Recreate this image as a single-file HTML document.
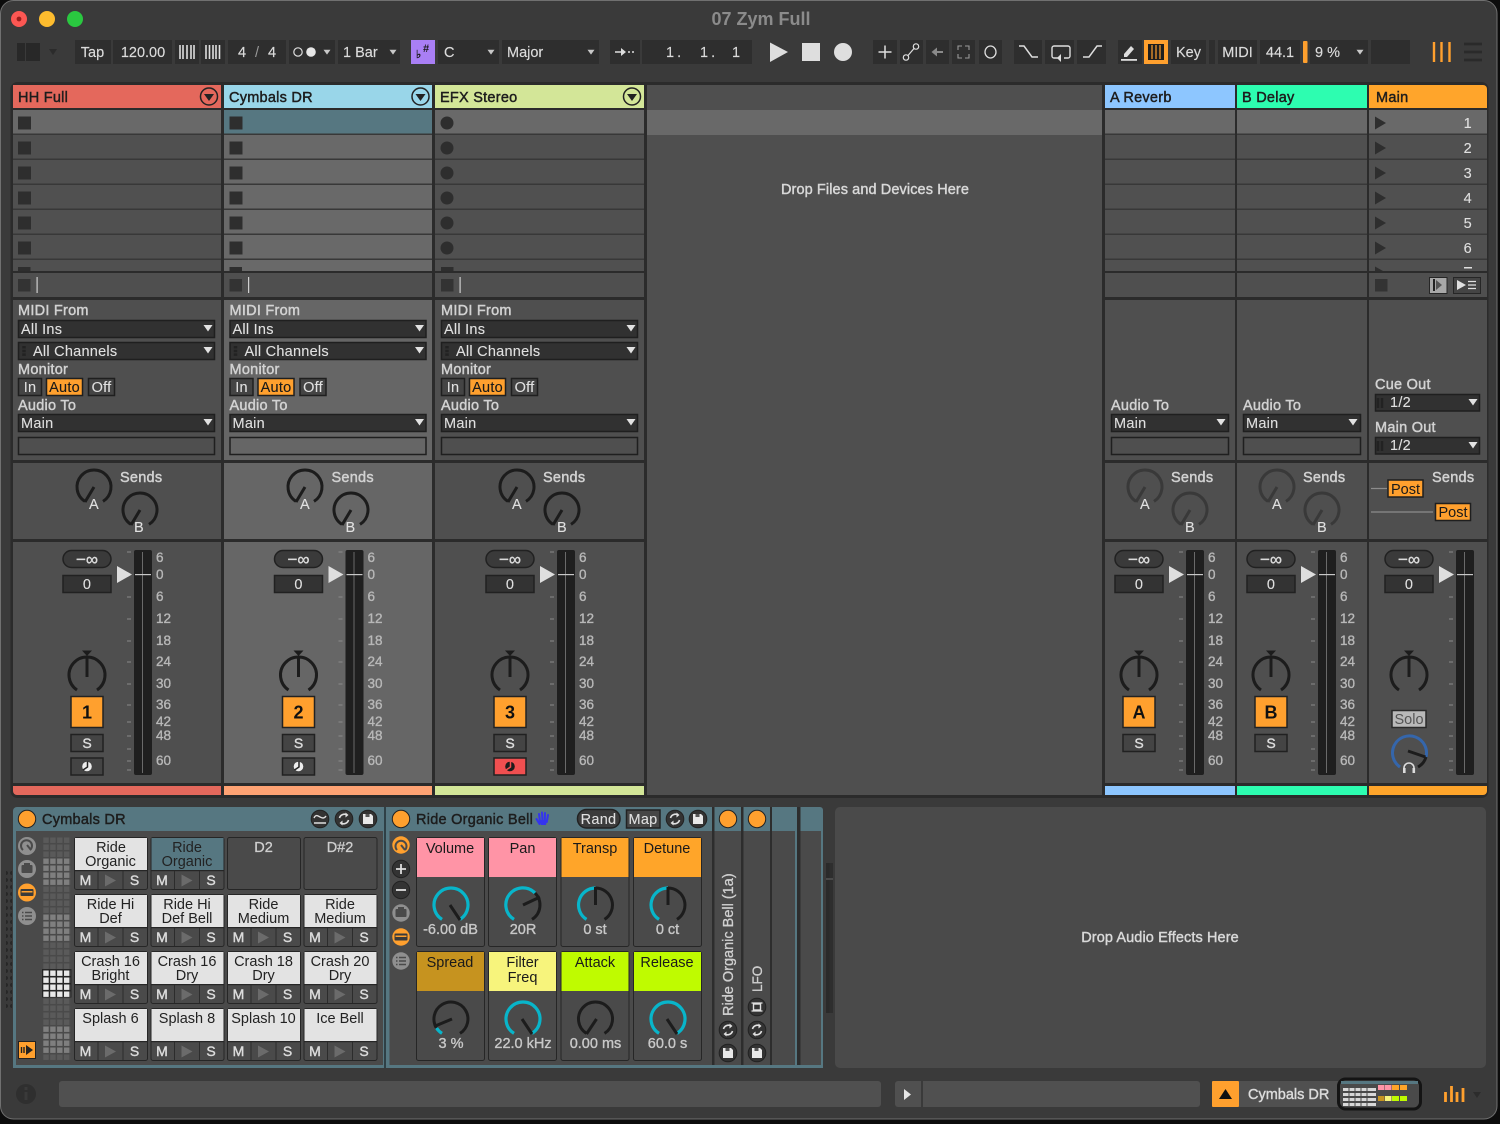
<!DOCTYPE html>
<html><head><meta charset="utf-8"><title>07 Zym Full</title>
<style>
html,body{margin:0;padding:0;background:#0c0c0c;width:1500px;height:1124px;overflow:hidden}
svg{display:block;position:absolute;left:0;top:0}
text{font-family:"Liberation Sans",sans-serif;font-size:14px;fill:#d9d9d9}
.tb{font-size:14.5px;fill:#dcdcdc;stroke:#dcdcdc;stroke-width:.15}
.h{font-size:14.5px;letter-spacing:.25px;fill:#1d1d1d;stroke:#1d1d1d;stroke-width:.45}
.l{font-size:14.5px;letter-spacing:.25px;fill:#d2d2d2;stroke:#d2d2d2;stroke-width:.45}
.v{font-size:14.5px;letter-spacing:.25px;fill:#e0e0e0;stroke:#e0e0e0;stroke-width:.1}
.m{text-anchor:middle}
.db{font-size:13.5px;fill:#b8b8b8;stroke:#b8b8b8;stroke-width:.35}
.d{fill:#1b1b1b}
.p{font-size:14.5px;fill:#222;text-anchor:middle}
.ms{font-size:14px;fill:#dcdcdc;stroke:#dcdcdc;stroke-width:.4;text-anchor:middle}
.kv{font-size:14.5px;fill:#c8c8c8;stroke:#c8c8c8;stroke-width:.35;text-anchor:middle}
.n{font-size:18px;font-weight:bold;fill:#111;text-anchor:middle}
.ml{font-size:14.5px;fill:#1a1a1a;text-anchor:middle}
.a{stroke:#1c1c1c;stroke-width:3;fill:none}
.a2{stroke:#393939;stroke-width:3;fill:none}
.t{stroke:#08b5ca;stroke-width:3.2;fill:none}
</style></head><body>
<svg width="1500" height="1124" viewBox="0 0 1500 1124" xmlns="http://www.w3.org/2000/svg">
<defs>
<pattern id="rows" x="0" y="110" width="10" height="25" patternUnits="userSpaceOnUse"><rect width="10" height="25" fill="#505050"/><rect y="23.5" width="10" height="1.5" fill="#383838"/></pattern>
<pattern id="rowsS" x="0" y="110" width="10" height="25" patternUnits="userSpaceOnUse"><rect width="10" height="25" fill="#696969"/><rect y="23.5" width="10" height="1.5" fill="#383838"/></pattern>
<pattern id="cD" x="43.3" y="837.5" width="6.9" height="7" patternUnits="userSpaceOnUse"><rect width="5.4" height="5.4" fill="#5a5a5a"/></pattern>
<pattern id="cL" x="43.3" y="837.5" width="6.9" height="7" patternUnits="userSpaceOnUse"><rect width="5.4" height="5.4" fill="#7f7f7f"/></pattern>
<pattern id="cW" x="43.3" y="837.5" width="6.9" height="7" patternUnits="userSpaceOnUse"><rect width="5.4" height="5.4" fill="#e8e8e8"/></pattern>
<pattern id="dots" x="3" y="870" width="6" height="7" patternUnits="userSpaceOnUse"><circle cx="3" cy="3" r="2" fill="#272727"/></pattern>
<polygon id="tri" points="-4.5,-3 4.5,-3 0,3.5" fill="#e2e2e2"/>
<polygon id="sm" points="-3.5,-2.2 3.5,-2.2 0,2.6" fill="#c8c8c8"/>
<g id="k"><path class="a" d="M-9 14.4A17 17 0 1 1 9 14.4"/><path class="a" stroke-width="2.5" d="M0 0L-9 15"/></g>
<g id="kd"><path class="a2" d="M-9 14.4A17 17 0 1 1 9 14.4"/><path class="a2" d="M0 0L-9 15"/></g>
<g id="mix">
<rect x="63" y="550.5" width="48" height="17" rx="8.5" fill="#3a3a3a" stroke="#212121" stroke-width="1.5"/>
<rect x="63" y="575.5" width="48" height="17" fill="#333" stroke="#212121" stroke-width="1.5"/>
<polygon points="117,566 117,583 132,574.5" fill="#dedede"/>
<rect x="134" y="550" width="18" height="225" rx="2" fill="#1f1f1f"/>
<rect x="142" y="552" width="1" height="221" fill="#6a6a6a"/>
<rect x="135" y="574" width="16" height="1.2" fill="#c8c8c8"/>
<path d="M127 552h4M127 597h4M127 619h4M127 641h4M127 662h4M127 684h4M127 705h4M127 722h4M127 736h4M127 749h4M127 761h4M127 770h4" stroke="#8a8a8a" stroke-width="1"/>
<polygon points="82,650.5 92,650.5 87,656" fill="#1c1c1c"/>
<path class="a" d="M77 690A18 18 0 1 1 97 690"/>
<path class="a" d="M87 658V677"/>
</g>
<g id="sb"><rect x="71" y="734.5" width="32" height="17" fill="#444" stroke="#212121" stroke-width="1.5"/></g>
<g id="arm"><rect x="71" y="758" width="32" height="17" fill="#444" stroke="#212121" stroke-width="1.5"/><circle cx="87" cy="766.5" r="4.8" fill="#ececec"/><path d="M87.500 761.500V767L83 770" stroke="#222" stroke-width="1.500" fill="none"/></g>
<g id="trk"><rect x="71" y="696.5" width="32" height="31" fill="#ffa02e" stroke="#222" stroke-width="1.5"/></g>
<g id="io">
<rect x="18.5" y="320.5" width="196" height="17" fill="#313131" stroke="#1f1f1f" stroke-width="1.5"/>
<use href="#tri" x="208" y="328"/>
<rect x="18.5" y="342.5" width="196" height="17" fill="#313131" stroke="#1f1f1f" stroke-width="1.5"/>
<use href="#tri" x="208" y="350"/>
<path d="M24 346v10" stroke="#222" stroke-width="3.5" stroke-dasharray="2.5 1.2"/>
<rect x="18.5" y="378.5" width="23" height="17" fill="#444" stroke="#1f1f1f" stroke-width="1.5"/>
<rect x="46.5" y="378.5" width="36" height="17" fill="#ffa02e" stroke="#1f1f1f" stroke-width="1.5"/>
<rect x="88.5" y="378.5" width="26" height="17" fill="#444" stroke="#1f1f1f" stroke-width="1.5"/>
<rect x="18.5" y="414.5" width="196" height="17" fill="#313131" stroke="#1f1f1f" stroke-width="1.5"/>
<use href="#tri" x="208" y="422"/>
<rect x="18.5" y="437.5" width="196" height="17" fill="none" stroke="#1f1f1f" stroke-width="1.5"/>
</g>
<g id="rt">
<rect x="1111.5" y="414.5" width="117" height="17" fill="#313131" stroke="#1f1f1f" stroke-width="1.5"/>
<use href="#tri" x="1221" y="422"/>
<rect x="1111.5" y="437.5" width="117" height="17" fill="none" stroke="#1f1f1f" stroke-width="1.5"/>
</g>
<g id="clip"><rect x="-6.5" y="-6.5" width="13" height="13" fill="#2e2e2e"/></g>
<g id="pad">
<rect x="74.5" y="837.5" width="73" height="52" rx="2" fill="#4a4a4a" stroke="#262626"/>
<rect x="75" y="838" width="72" height="32"/>
<rect x="75" y="870" width="72" height="1.2" fill="#262626"/>
<rect x="97.5" y="871" width="1" height="18" fill="#2c2c2c"/>
<rect x="122.5" y="871" width="1" height="18" fill="#2c2c2c"/>
<polygon points="105,874.5 105,886.5 116,880.5" fill="#6b6b6b"/>
</g>
<g id="empty"><rect x="74.5" y="837.5" width="73" height="52" rx="2" fill="#4a4a4a" stroke="#262626"/></g>
<g id="cell">
<rect x="416.5" y="837.5" width="68" height="109" rx="2" fill="#4a4a4a" stroke="#262626"/>
<rect x="417" y="838" width="67" height="39"/>
</g>
<g id="rc"><circle r="8.8" fill="#333" stroke="#222"/><path d="M-4.5 -1A5 5 0 0 1 3 -4M4.5 1A5 5 0 0 1 -3 4" stroke="#e0e0e0" stroke-width="1.6" fill="none"/><path d="M1.5 -6.5L4.5 -4L1.5 -1.5ZM-1.5 6.5L-4.5 4L-1.5 1.5Z" fill="#e0e0e0"/></g>
<g id="sv"><circle r="8.8" fill="#333" stroke="#222"/><path d="M-5 -5H3L5 -3V5H-5Z" fill="#e8e8e8"/><rect x="-2.5" y="-5" width="4" height="3" fill="#555"/></g>
</defs>

<!-- window -->
<rect x="0.5" y="0.5" width="1496.5" height="1118.5" rx="13" fill="#3a3a3a" stroke="#707070"/>
<circle cx="19" cy="19" r="8" fill="#fc5753"/><circle cx="19" cy="19" r="2.4" fill="#9a1f1c"/>
<circle cx="47" cy="19" r="8" fill="#fdbc2e"/><circle cx="75" cy="19" r="8" fill="#2ac840"/>
<text x="761" y="25" class="m" style="font-size:18px;font-weight:bold;fill:#8b8b8b">07 Zym Full</text>

<!-- toolbar -->
<g fill="#2e2e2e">
<rect x="17" y="43" width="8" height="18" fill="#282828"/><rect x="26" y="43" width="14" height="18" fill="#282828"/>
<rect x="75" y="40" width="36" height="24"/><rect x="113" y="40" width="59" height="24"/><rect x="175" y="40" width="24" height="24"/><rect x="201" y="40" width="24" height="24"/><rect x="228" y="40" width="58" height="24"/><rect x="289" y="40" width="46" height="24"/><rect x="338" y="40" width="62" height="24"/>
<rect x="438" y="40" width="61" height="24"/><rect x="502" y="40" width="97" height="24"/><rect x="610" y="40" width="30" height="24"/><rect x="642" y="40" width="110" height="24"/>
<rect x="873" y="40" width="24" height="24"/><rect x="900" y="40" width="23" height="24"/><rect x="926" y="40" width="23" height="24"/><rect x="952" y="40" width="23" height="24"/><rect x="979" y="40" width="23" height="24"/>
<rect x="1014" y="40" width="28" height="24"/><rect x="1045" y="40" width="29" height="24"/><rect x="1077" y="40" width="29" height="24"/>
<rect x="1118" y="40" width="24" height="24"/><rect x="1171" y="40" width="35" height="24"/><rect x="1209" y="40" width="6" height="24"/><rect x="1218" y="40" width="39" height="24"/><rect x="1260" y="40" width="40" height="24"/><rect x="1310" y="40" width="58" height="24"/><rect x="1371" y="40" width="39" height="24"/>
</g>
<polygon points="49,49 57,49 53,55" fill="#2b2b2b"/>
<text x="92.5" y="57" class="tb m">Tap</text>
<text x="143" y="57" class="tb m">120.00</text>
<path d="M180 45v14M183 45v14M187 45v14M191 45v14M194 45v14" stroke="#ddd" stroke-width="1.6"/>
<path d="M206 45v14M209.500 45v14M213 45v14M216 45v14M219.500 45v14" stroke="#ddd" stroke-width="1.6"/>
<text x="238" y="57" class="tb">4</text><text x="257" y="57" class="tb m" style="fill:#999;stroke:none">/</text><text x="268" y="57" class="tb">4</text>
<circle cx="298" cy="52" r="4.2" fill="none" stroke="#ddd" stroke-width="1.2"/><circle cx="311" cy="52" r="4.8" fill="#e6e6e6"/>
<use href="#sm" x="327" y="52"/>
<text x="343" y="57" class="tb">1 Bar</text><use href="#sm" x="393" y="52"/>
<rect x="411" y="40" width="24" height="24" fill="#a97ff5"/>
<text x="416" y="58" style="font-size:11px;fill:#1a1a1a;font-weight:bold">♭</text><text x="423" y="52" style="font-size:11px;fill:#1a1a1a;font-weight:bold">#</text>
<text x="444" y="57" class="tb">C</text><use href="#sm" x="491" y="52"/>
<text x="507" y="57" class="tb">Major</text><use href="#sm" x="591" y="52"/>
<path d="M615 52h8M628 52h2M632 52h2" stroke="#ddd" stroke-width="1.6"/><polygon points="621,48 626,52 621,56" fill="#ddd"/>
<text x="666" y="57" class="tb" style="letter-spacing:3px">1.</text><text x="700" y="57" class="tb" style="letter-spacing:3px">1.</text><text x="732" y="57" class="tb">1</text>
<polygon points="770,42.500 770,62 788,52" fill="#dedede"/>
<rect x="802" y="43" width="18" height="18" fill="#dedede"/>
<circle cx="843" cy="52" r="9" fill="#dedede"/>
<path d="M878.500 52h13M885 45.500v13" stroke="#ddd" stroke-width="1.5"/>
<circle cx="906" cy="57.500" r="2.700" fill="none" stroke="#ddd" stroke-width="1.2"/><circle cx="916" cy="46.500" r="2.700" fill="none" stroke="#ddd" stroke-width="1.2"/><path d="M908 55.500l6-7" stroke="#ddd" stroke-width="1.2"/>
<path d="M943 52h-9" stroke="#8a8a8a" stroke-width="2"/><polygon points="937,47.500 931.500,52 937,56.500" fill="#8a8a8a"/>
<path d="M958 50v-4h4M969 50v-4h-4M958 54v4h4M969 54v4h-4" stroke="#999" stroke-width="1.1" fill="none"/>
<ellipse cx="990.500" cy="52" rx="5.500" ry="6" fill="none" stroke="#ddd" stroke-width="1.3"/>
<path d="M1019 46h5l8 11h6" stroke="#ddd" stroke-width="1.5" fill="none"/>
<path d="M1064 59h4a2 2 0 0 0 2-2v-8a2 2 0 0 0-2-2h-14a2 2 0 0 0-2 2v8a2 2 0 0 0 2 2h5" stroke="#ddd" stroke-width="1.4" fill="none" transform="translate(0 -1)"/><polygon points="1061,54 1057,58 1061,62" fill="#ddd"/>
<path d="M1083 57h6l8-11h5" stroke="#ddd" stroke-width="1.5" fill="none"/>
<path d="M1124 54l7-8 3 3-7 8h-3z" fill="#ddd"/><rect x="1121" y="59" width="16" height="1.800" fill="#ddd"/>
<rect x="1144" y="40" width="24" height="24" fill="#ffa02e"/>
<rect x="1148" y="44" width="16" height="16" fill="#1e1e1e"/><path d="M1152 45v14M1156 45v14M1160 45v14" stroke="#ffa02e" stroke-width="1.200"/>
<text x="1188.500" y="57" class="tb m">Key</text>
<text x="1237.500" y="57" class="tb m">MIDI</text>
<text x="1280" y="57" class="tb m">44.1</text>
<rect x="1303" y="41" width="4.500" height="22" rx="1" fill="#ffa02e"/>
<text x="1315" y="57" class="tb">9 %</text><use href="#sm" x="1360" y="52"/>
<path d="M1434 42v20M1441.500 42v20M1449.500 42v20" stroke="#ffa02e" stroke-width="2.400"/>
<path d="M1464 44h18M1464 52h18M1464 60h18" stroke="#2a2a2a" stroke-width="2.800"/>

<!-- session frame -->
<rect x="10.500" y="82" width="1478" height="716" rx="7" fill="#2b2b2b"/>
<!-- headers -->
<rect x="13" y="85" width="208" height="23" fill="#e4685c"/>
<rect x="224" y="85" width="208" height="23" fill="#99d6e9"/>
<rect x="435" y="85" width="209" height="23" fill="#d3e698"/>
<rect x="647" y="85" width="455" height="710" fill="#4f4f4f"/>
<rect x="1105" y="85" width="130" height="23" fill="#8dc6ff"/>
<rect x="1237" y="85" width="130" height="23" fill="#2dfdb0"/>
<path d="M1369 85h114a4 4 0 0 1 4 4v19h-118z" fill="#ffa52b"/>
<text x="18" y="102" class="h">HH Full</text>
<text x="229" y="102" class="h">Cymbals DR</text>
<text x="440" y="102" class="h">EFX Stereo</text>
<text x="1110" y="102" class="h">A Reverb</text>
<text x="1242" y="102" class="h">B Delay</text>
<text x="1376" y="102" class="h">Main</text>
<g fill="none" stroke="#222" stroke-width="1.500"><circle cx="209" cy="96.500" r="8.500"/><circle cx="420.500" cy="96.500" r="8.500"/><circle cx="632" cy="96.500" r="8.500"/></g>
<g fill="#222"><polygon points="204,94 214,94 209,101"/><polygon points="415.500,94 425.500,94 420.500,101"/><polygon points="627,94 637,94 632,101"/></g>

<!-- clip rows -->
<rect x="13" y="110" width="208" height="161" fill="url(#rows)"/>
<rect x="224" y="110" width="208" height="161" fill="url(#rowsS)"/>
<rect x="435" y="110" width="209" height="161" fill="url(#rows)"/>
<rect x="1105" y="110" width="130" height="161" fill="url(#rows)"/>
<rect x="1237" y="110" width="130" height="161" fill="url(#rows)"/>
<rect x="1369" y="110" width="118" height="161" fill="url(#rows)"/>
<g fill="#696969"><rect x="13" y="110" width="208" height="23.500"/><rect x="435" y="110" width="209" height="23.500"/><rect x="647" y="110" width="455" height="25"/><rect x="1105" y="110" width="130" height="23.500"/><rect x="1237" y="110" width="130" height="23.500"/><rect x="1369" y="110" width="118" height="23.500"/></g>
<rect x="224" y="110" width="208" height="23.500" fill="#567781"/>
<!-- clip glyphs -->
<use href="#clip" x="24.500" y="123"/><use href="#clip" x="24.500" y="148"/><use href="#clip" x="24.500" y="173"/><use href="#clip" x="24.500" y="198"/><use href="#clip" x="24.500" y="223"/><use href="#clip" x="24.500" y="248"/>
<use href="#clip" x="236" y="123"/><use href="#clip" x="236" y="148"/><use href="#clip" x="236" y="173"/><use href="#clip" x="236" y="198"/><use href="#clip" x="236" y="223"/><use href="#clip" x="236" y="248"/>
<g fill="#2e2e2e"><circle cx="447" cy="123" r="6.500"/><circle cx="447" cy="148" r="6.500"/><circle cx="447" cy="173" r="6.500"/><circle cx="447" cy="198" r="6.500"/><circle cx="447" cy="223" r="6.500"/><circle cx="447" cy="248" r="6.500"/>
<rect x="18" y="267" width="12.500" height="4"/><rect x="229.500" y="267" width="12.500" height="4"/><rect x="441" y="267" width="12.500" height="4"/></g>
<g fill="#2e2e2e"><polygon points="1375,116.500 1375,129.500 1386,123"/><polygon points="1375,141.500 1375,154.500 1386,148"/><polygon points="1375,166.500 1375,179.500 1386,173"/><polygon points="1375,191.500 1375,204.500 1386,198"/><polygon points="1375,216.500 1375,229.500 1386,223"/><polygon points="1375,241.500 1375,254.500 1386,248"/><polygon points="1375,266.500 1375,271 1383,271"/></g>
<g text-anchor="end"><text x="1472" y="128" class="v">1</text><text x="1472" y="153" class="v">2</text><text x="1472" y="178" class="v">3</text><text x="1472" y="203" class="v">4</text><text x="1472" y="228" class="v">5</text><text x="1472" y="253" class="v">6</text></g>
<rect x="1464" y="267" width="8" height="1.500" fill="#e0e0e0"/>
<!-- stop row -->
<g fill="#4f4f4f"><rect x="13" y="273" width="208" height="24"/><rect x="224" y="273" width="208" height="24"/><rect x="435" y="273" width="209" height="24"/><rect x="1105" y="273" width="130" height="24"/><rect x="1237" y="273" width="130" height="24"/><rect x="1369" y="273" width="118" height="24"/></g>
<g fill="#333"><rect x="18" y="279" width="12.500" height="12.500"/><rect x="229.500" y="279" width="12.500" height="12.500"/><rect x="441" y="279" width="12.500" height="12.500"/><rect x="1375" y="279" width="12.500" height="12.500"/></g>
<g fill="#cfcfcf"><rect x="36.500" y="277" width="1.200" height="16"/><rect x="248" y="277" width="1.200" height="16"/><rect x="459.500" y="277" width="1.200" height="16"/></g>
<rect x="1429.500" y="277.500" width="17.500" height="16" fill="#a8a8a8" stroke="#262626"/><path d="M1434 279v12" stroke="#222" stroke-width="2"/><polygon points="1436,280 1436,290 1442,285" fill="#555"/>
<rect x="1453.500" y="277.500" width="27" height="16" fill="#444" stroke="#262626"/><polygon points="1457,280 1457,290 1466,285" fill="#e0e0e0"/><path d="M1468 281.500h8M1468 285h8M1468 288.500h8" stroke="#e0e0e0" stroke-width="1.200"/>

<!-- panels io / sends / mixer -->
<g fill="#4f4f4f">
<rect x="13" y="300" width="208" height="160"/><rect x="13" y="463" width="208" height="76"/><rect x="13" y="542" width="208" height="241"/>
<rect x="435" y="300" width="209" height="160"/><rect x="435" y="463" width="209" height="76"/><rect x="435" y="542" width="209" height="241"/>
<rect x="1105" y="300" width="130" height="160"/><rect x="1105" y="463" width="130" height="76"/><rect x="1105" y="542" width="130" height="241"/>
<rect x="1237" y="300" width="130" height="160"/><rect x="1237" y="463" width="130" height="76"/><rect x="1237" y="542" width="130" height="241"/>
<rect x="1369" y="300" width="118" height="160"/><rect x="1369" y="463" width="118" height="76"/><rect x="1369" y="542" width="118" height="241"/>
</g>
<g fill="#666"><rect x="224" y="300" width="208" height="160"/><rect x="224" y="463" width="208" height="76"/><rect x="224" y="542" width="208" height="241"/></g>
<path d="M13 786h208v9h-204a4 4 0 0 1-4-4z" fill="#e4685c"/>
<rect x="224" y="786" width="208" height="9" fill="#ffa374"/>
<rect x="435" y="786" width="209" height="9" fill="#d3e698"/>
<rect x="1105" y="786" width="130" height="9" fill="#8dc6ff"/>
<rect x="1237" y="786" width="130" height="9" fill="#2dfdb0"/>
<path d="M1369 786h118v5a4 4 0 0 1-4 4h-114z" fill="#ffa52b"/>
<text x="875" y="194" class="l m" style="fill:#dcdcdc;letter-spacing:.1px">Drop Files and Devices Here</text>

<!-- track io -->
<use href="#io"/><use href="#io" x="211.500"/><use href="#io" x="423"/>
<text x="18" y="315" class="l">MIDI From</text><text x="21" y="334" class="v">All Ins</text><text x="33" y="356" class="v">All Channels</text><text x="18" y="374" class="l">Monitor</text><text x="30" y="392" class="v m">In</text><text x="64.500" y="392" class="v m" style="fill:#1a1a1a;stroke:#1a1a1a">Auto</text><text x="101.500" y="392" class="v m">Off</text><text x="18" y="410" class="l">Audio To</text><text x="21" y="428" class="v">Main</text>
<text x="229.500" y="315" class="l">MIDI From</text><text x="232.500" y="334" class="v">All Ins</text><text x="244.500" y="356" class="v">All Channels</text><text x="229.500" y="374" class="l">Monitor</text><text x="241.500" y="392" class="v m">In</text><text x="276" y="392" class="v m" style="fill:#1a1a1a;stroke:#1a1a1a">Auto</text><text x="313" y="392" class="v m">Off</text><text x="229.500" y="410" class="l">Audio To</text><text x="232.500" y="428" class="v">Main</text>
<text x="441" y="315" class="l">MIDI From</text><text x="444" y="334" class="v">All Ins</text><text x="456" y="356" class="v">All Channels</text><text x="441" y="374" class="l">Monitor</text><text x="453" y="392" class="v m">In</text><text x="487.500" y="392" class="v m" style="fill:#1a1a1a;stroke:#1a1a1a">Auto</text><text x="524.500" y="392" class="v m">Off</text><text x="441" y="410" class="l">Audio To</text><text x="444" y="428" class="v">Main</text>
<!-- return io -->
<use href="#rt"/><use href="#rt" x="132"/>
<text x="1111" y="410" class="l">Audio To</text><text x="1114" y="428" class="v">Main</text>
<text x="1243" y="410" class="l">Audio To</text><text x="1246" y="428" class="v">Main</text>
<!-- main io -->
<text x="1375" y="389" class="l">Cue Out</text>
<rect x="1375.500" y="394.500" width="104" height="16.500" fill="#313131" stroke="#1f1f1f" stroke-width="1.500"/><use href="#tri" x="1473" y="402"/><path d="M1378 398v10M1382 398v10" stroke="#222" stroke-width="2.500"/><text x="1390" y="407" class="v">1/2</text>
<text x="1375" y="432" class="l">Main Out</text>
<rect x="1375.500" y="437.500" width="104" height="16.500" fill="#313131" stroke="#1f1f1f" stroke-width="1.500"/><use href="#tri" x="1473" y="445"/><path d="M1378 441v10M1382 441v10" stroke="#222" stroke-width="2.500"/><text x="1390" y="450" class="v">1/2</text>

<!-- sends -->
<text x="120" y="482" class="l">Sends</text><use href="#k" x="94" y="487"/><use href="#k" x="140" y="510"/><text x="94" y="509" class="v m">A</text><text x="139" y="532" class="v m">B</text>
<text x="331.500" y="482" class="l">Sends</text><use href="#k" x="305" y="487"/><use href="#k" x="351" y="510"/><text x="305" y="509" class="v m">A</text><text x="350.500" y="532" class="v m">B</text>
<text x="543" y="482" class="l">Sends</text><use href="#k" x="517" y="487"/><use href="#k" x="562" y="510"/><text x="517" y="509" class="v m">A</text><text x="562" y="532" class="v m">B</text>
<text x="1171" y="482" class="l">Sends</text><use href="#kd" x="1145" y="487"/><use href="#kd" x="1190" y="510"/><text x="1145" y="509" class="v m">A</text><text x="1190" y="532" class="v m">B</text>
<text x="1303" y="482" class="l">Sends</text><use href="#kd" x="1277" y="487"/><use href="#kd" x="1322" y="510"/><text x="1277" y="509" class="v m">A</text><text x="1322" y="532" class="v m">B</text>
<text x="1432" y="482" class="l">Sends</text>
<path d="M1371 488.500h16M1371 512h62" stroke="#8c8c8c" stroke-width="1.200"/>
<rect x="1388" y="480" width="35" height="17" fill="#ffa02e" stroke="#1f1f1f" stroke-width="1.500"/><text x="1405.500" y="494" class="ml">Post</text>
<rect x="1435.500" y="503.500" width="35" height="17" fill="#ffa02e" stroke="#1f1f1f" stroke-width="1.500"/><text x="1453" y="517" class="ml">Post</text>

<!-- mixers -->
<use href="#mix"/><use href="#mix" x="211.500"/><use href="#mix" x="423"/><use href="#mix" x="1052"/><use href="#mix" x="1184"/><use href="#mix" x="1322"/>
<use href="#trk"/><use href="#trk" x="211.500"/><use href="#trk" x="423"/><use href="#trk" x="1052"/><use href="#trk" x="1184"/>
<use href="#sb"/><use href="#sb" x="211.500"/><use href="#sb" x="423"/><use href="#sb" x="1052"/><use href="#sb" x="1184"/>
<use href="#arm"/><use href="#arm" x="211.500"/>
<rect x="494" y="758" width="32" height="17" fill="#f04f50" stroke="#212121" stroke-width="1.500"/><circle cx="510" cy="766.500" r="4.800" fill="#1c1c1c"/><path d="M510.500 761.500V767L506 770" stroke="#f04f50" stroke-width="1.500" fill="none"/>

<text x="87" y="565" class="ms" style="font-size:17px">−∞</text><text x="298.500" y="565" class="ms" style="font-size:17px">−∞</text><text x="510" y="565" class="ms" style="font-size:17px">−∞</text><text x="1139" y="565" class="ms" style="font-size:17px">−∞</text><text x="1271" y="565" class="ms" style="font-size:17px">−∞</text><text x="1409" y="565" class="ms" style="font-size:17px">−∞</text>
<text x="87" y="589" class="v m">0</text><text x="298.500" y="589" class="v m">0</text><text x="510" y="589" class="v m">0</text><text x="1139" y="589" class="v m">0</text><text x="1271" y="589" class="v m">0</text><text x="1409" y="589" class="v m">0</text>
<text x="87" y="718.500" class="n">1</text><text x="298.500" y="718.500" class="n">2</text><text x="510" y="718.500" class="n">3</text><text x="1139" y="718.500" class="n">A</text><text x="1271" y="718.500" class="n">B</text>
<text x="87" y="748" class="ms">S</text><text x="298.500" y="748" class="ms">S</text><text x="510" y="748" class="ms">S</text><text x="1139" y="748" class="ms">S</text><text x="1271" y="748" class="ms">S</text>

<g>
<text class="db" x="156" y="562">6</text><text class="db" x="156" y="579">0</text><text class="db" x="156" y="601">6</text><text class="db" x="156" y="623">12</text><text class="db" x="156" y="645">18</text><text class="db" x="156" y="666">24</text><text class="db" x="156" y="688">30</text><text class="db" x="156" y="709">36</text><text class="db" x="156" y="726">42</text><text class="db" x="156" y="740">48</text><text class="db" x="156" y="765">60</text>
<text class="db" x="367.500" y="562">6</text><text class="db" x="367.500" y="579">0</text><text class="db" x="367.500" y="601">6</text><text class="db" x="367.500" y="623">12</text><text class="db" x="367.500" y="645">18</text><text class="db" x="367.500" y="666">24</text><text class="db" x="367.500" y="688">30</text><text class="db" x="367.500" y="709">36</text><text class="db" x="367.500" y="726">42</text><text class="db" x="367.500" y="740">48</text><text class="db" x="367.500" y="765">60</text>
<text class="db" x="579" y="562">6</text><text class="db" x="579" y="579">0</text><text class="db" x="579" y="601">6</text><text class="db" x="579" y="623">12</text><text class="db" x="579" y="645">18</text><text class="db" x="579" y="666">24</text><text class="db" x="579" y="688">30</text><text class="db" x="579" y="709">36</text><text class="db" x="579" y="726">42</text><text class="db" x="579" y="740">48</text><text class="db" x="579" y="765">60</text>
<text class="db" x="1208" y="562">6</text><text class="db" x="1208" y="579">0</text><text class="db" x="1208" y="601">6</text><text class="db" x="1208" y="623">12</text><text class="db" x="1208" y="645">18</text><text class="db" x="1208" y="666">24</text><text class="db" x="1208" y="688">30</text><text class="db" x="1208" y="709">36</text><text class="db" x="1208" y="726">42</text><text class="db" x="1208" y="740">48</text><text class="db" x="1208" y="765">60</text>
<text class="db" x="1340" y="562">6</text><text class="db" x="1340" y="579">0</text><text class="db" x="1340" y="601">6</text><text class="db" x="1340" y="623">12</text><text class="db" x="1340" y="645">18</text><text class="db" x="1340" y="666">24</text><text class="db" x="1340" y="688">30</text><text class="db" x="1340" y="709">36</text><text class="db" x="1340" y="726">42</text><text class="db" x="1340" y="740">48</text><text class="db" x="1340" y="765">60</text>
</g>
<!-- main solo + cue -->
<rect x="1392" y="710.500" width="34" height="17" fill="#b9b9b9" stroke="#2a2a2a" stroke-width="1.500"/><text x="1409" y="724" class="m" style="font-size:14.500px;fill:#555">Solo</text>
<path d="M1400 767A17 17 0 1 1 1426 757" stroke="#3566ab" stroke-width="3" fill="none"/>
<path d="M1426 757A17 17 0 0 1 1418 767" stroke="#1c1c1c" stroke-width="3" fill="none"/>
<path d="M1408 751L1425.500 757" stroke="#1c1c1c" stroke-width="2.800"/>
<path d="M1404 771v-3a5 5 0 0 1 10 0v3" stroke="#dcdcdc" stroke-width="1.600" fill="none"/><rect x="1403" y="768" width="2.600" height="5" fill="#dcdcdc"/><rect x="1412.500" y="768" width="2.600" height="5" fill="#dcdcdc"/>

<!-- DETAIL VIEW -->
<rect x="6" y="870" width="6" height="140" fill="url(#dots)"/>
<path d="M13 811a4 4 0 0 1 4-4h803a3 3 0 0 1 3 3v258h-810z" fill="#567781"/>
<rect x="16" y="831" width="367" height="234" fill="#4a4a4a"/>
<rect x="384" y="807" width="2" height="261" fill="#2f4046"/>
<rect x="389.500" y="831" width="322.500" height="234" fill="#4a4a4a"/>
<rect x="712" y="807" width="2.500" height="258" fill="#2d2d2d"/>
<rect x="714.500" y="831" width="26.500" height="234" fill="#4a4a4a"/>
<rect x="741" y="807" width="2.500" height="258" fill="#2d2d2d"/>
<rect x="743.500" y="831" width="26.500" height="234" fill="#4a4a4a"/>
<rect x="770" y="807" width="2" height="258" fill="#2d2d2d"/>
<rect x="772" y="831" width="23" height="234" fill="#4a4a4a"/>
<rect x="797" y="807" width="3.500" height="258" fill="#2d2d2d"/>
<rect x="800.500" y="831" width="20.500" height="234" fill="#4a4a4a"/>
<circle cx="27" cy="819" r="8.700" fill="#ffa02e" stroke="#222"/>
<text x="42" y="824" class="h">Cymbals DR</text>
<g><circle cx="320" cy="819" r="8.800" fill="#333" stroke="#222"/><path d="M314 818c2-4 4-2 6-1s4 2 6-1M314 823h12" stroke="#e0e0e0" stroke-width="1.400" fill="none"/></g>
<use href="#rc" x="344" y="819"/><use href="#sv" x="368" y="819"/>
<circle cx="27" cy="846" r="9" fill="#8f8f8f"/><path d="M23 850a5.500 5.500 0 1 1 7 0" stroke="#4a4a4a" stroke-width="2" fill="none"/><path d="M27 845l4 5" stroke="#4a4a4a" stroke-width="2"/>
<circle cx="27" cy="869" r="9" fill="#8f8f8f"/><rect x="21.500" y="865" width="11" height="8" rx="1" fill="#4a4a4a"/><rect x="24" y="863" width="6" height="2" fill="#4a4a4a"/>
<circle cx="27" cy="892.500" r="9" fill="#ffa02e"/><rect x="20.500" y="889" width="13" height="7" rx="1" fill="#3a3a3a"/><rect x="21.500" y="891" width="11" height="1.500" fill="#ffa02e"/>
<circle cx="27" cy="916" r="9" fill="#8f8f8f"/><path d="M25 912.500h7M25 916h7M25 919.500h7M22 912.500h1.500M22 916h1.500M22 919.500h1.500" stroke="#4a4a4a" stroke-width="1.500"/>
<rect x="18.500" y="1041.500" width="17" height="17" fill="#ffa02e" stroke="#222"/><path d="M21.500 1047v6M24 1047v6" stroke="#222" stroke-width="1.400"/><polygon points="26,1045 26,1055 33,1050" fill="#222"/>

<!-- pad grid -->
<rect x="43" y="837.500" width="28" height="21" fill="url(#cD)"/>
<rect x="43" y="858.500" width="28" height="28" fill="url(#cL)"/>
<rect x="43" y="886.500" width="28" height="28" fill="url(#cD)"/>
<rect x="43" y="914.500" width="28" height="28" fill="url(#cL)"/>
<rect x="43" y="942.500" width="28" height="28" fill="url(#cD)"/>
<rect x="42" y="969" width="29.500" height="28.500" fill="#262626"/>
<rect x="43" y="970.500" width="28" height="28" fill="url(#cW)"/>
<rect x="43" y="998.500" width="28" height="28" fill="url(#cD)"/>
<rect x="43" y="1026.500" width="28" height="28" fill="url(#cL)"/>
<rect x="43" y="1054.500" width="28" height="6" fill="url(#cD)"/>

<!-- pads -->
<use href="#pad" fill="#e3e3e3"/><use href="#pad" x="76.500" fill="#567781"/><use href="#empty" x="153"/><use href="#empty" x="229.500"/>
<use href="#pad" y="57" fill="#e3e3e3"/><use href="#pad" x="76.500" y="57" fill="#e3e3e3"/><use href="#pad" x="153" y="57" fill="#e3e3e3"/><use href="#pad" x="229.500" y="57" fill="#e3e3e3"/>
<use href="#pad" y="114" fill="#e3e3e3"/><use href="#pad" x="76.500" y="114" fill="#e3e3e3"/><use href="#pad" x="153" y="114" fill="#e3e3e3"/><use href="#pad" x="229.500" y="114" fill="#e3e3e3"/>
<use href="#pad" y="171" fill="#e3e3e3"/><use href="#pad" x="76.500" y="171" fill="#e3e3e3"/><use href="#pad" x="153" y="171" fill="#e3e3e3"/><use href="#pad" x="229.500" y="171" fill="#e3e3e3"/>
<text x="111" y="852" class="p">Ride</text><text x="110.500" y="866" class="p">Organic</text>
<text x="187" y="852" class="p">Ride</text><text x="187" y="866" class="p">Organic</text>
<text x="263.500" y="852" class="p" style="fill:#cfcfcf;stroke:#cfcfcf;stroke-width:.3">D2</text>
<text x="340" y="852" class="p" style="fill:#cfcfcf;stroke:#cfcfcf;stroke-width:.3">D#2</text>
<text x="110.500" y="909" class="p">Ride Hi</text><text x="110.500" y="923" class="p">Def</text>
<text x="187" y="909" class="p">Ride Hi</text><text x="187" y="923" class="p">Def Bell</text>
<text x="263.500" y="909" class="p">Ride</text><text x="263.500" y="923" class="p">Medium</text>
<text x="340" y="909" class="p">Ride</text><text x="340" y="923" class="p">Medium</text>
<text x="110.500" y="966" class="p">Crash 16</text><text x="110.500" y="980" class="p">Bright</text>
<text x="187" y="966" class="p">Crash 16</text><text x="187" y="980" class="p">Dry</text>
<text x="263.500" y="966" class="p">Crash 18</text><text x="263.500" y="980" class="p">Dry</text>
<text x="340" y="966" class="p">Crash 20</text><text x="340" y="980" class="p">Dry</text>
<text x="110.500" y="1023" class="p">Splash 6</text>
<text x="187" y="1023" class="p">Splash 8</text>
<text x="263.500" y="1023" class="p">Splash 10</text>
<text x="340" y="1023" class="p">Ice Bell</text>
<text class="ms" y="885" x="85.500 134.500 162 211">MSMS</text>
<text class="ms" y="942" x="85.500 134.500 162 211 238.500 287.500 315 364">MSMSMSMS</text>
<text class="ms" y="999" x="85.500 134.500 162 211 238.500 287.500 315 364">MSMSMSMS</text>
<text class="ms" y="1056" x="85.500 134.500 162 211 238.500 287.500 315 364">MSMSMSMS</text>

<!-- instrument -->
<circle cx="401" cy="819" r="8.700" fill="#ffa02e" stroke="#222"/>
<text x="416" y="824" class="h">Ride Organic Bell</text>
<g stroke="#3434ee" stroke-width="2" stroke-linecap="round" fill="none"><path d="M539 814l1 8M542 812.500l.5 8M545 813l-.2 8M548 815l-1.200 7M536.500 819l3 5"/></g><path d="M539 820h8l-1 5h-5z" fill="#3434ee"/>
<rect x="577.500" y="809.500" width="42.500" height="18.500" rx="9" fill="#3c3c3c" stroke="#222" stroke-width="1.500"/><text x="598.500" y="824" class="v m">Rand</text>
<rect x="626.500" y="810" width="33.500" height="18" fill="#464646" stroke="#222" stroke-width="1.500"/><text x="643" y="824" class="v m">Map</text>
<use href="#rc" x="675" y="819"/><use href="#sv" x="698" y="819"/>
<circle cx="401" cy="845" r="8.700" fill="#ffa02e"/><path d="M397 850a5.500 5.500 0 1 1 8 0M401 845l4 5" stroke="#4a4a4a" stroke-width="2" fill="none"/>
<circle cx="401" cy="869" r="8.700" fill="#333" stroke="#222"/><path d="M396 869h10M401 864v10" stroke="#ddd" stroke-width="1.800"/>
<circle cx="401" cy="890" r="8.700" fill="#333" stroke="#222"/><path d="M396 890h10" stroke="#ddd" stroke-width="1.800"/>
<circle cx="401" cy="913" r="8.700" fill="#8f8f8f"/><rect x="395.500" y="909" width="11" height="8" rx="1" fill="#4a4a4a"/><rect x="398" y="907" width="6" height="2" fill="#4a4a4a"/>
<circle cx="401" cy="937" r="8.700" fill="#ffa02e"/><rect x="394.500" y="933.500" width="13" height="7" rx="1" fill="#3a3a3a"/><rect x="395.500" y="935.500" width="11" height="1.500" fill="#ffa02e"/>
<circle cx="401" cy="961" r="8.700" fill="#8f8f8f"/><path d="M399 957.500h7M399 961h7M399 964.500h7M396 957.500h1.500M396 961h1.500M396 964.500h1.500" stroke="#4a4a4a" stroke-width="1.500"/>

<use href="#cell" fill="#ff94a6"/><use href="#cell" x="72" fill="#ff94a6"/><use href="#cell" x="144.500" fill="#ffa529"/><use href="#cell" x="217" fill="#ffa529"/>
<use href="#cell" y="114" fill="#c6931f"/><use href="#cell" x="72" y="114" fill="#f7f47c"/><use href="#cell" x="144.500" y="114" fill="#bffb00"/><use href="#cell" x="217" y="114" fill="#bffb00"/>
<text x="450" y="853" class="ml">Volume</text><text x="522.500" y="853" class="ml">Pan</text><text x="595" y="853" class="ml">Transp</text><text x="667" y="853" class="ml">Detune</text>
<text x="450" y="967" class="ml">Spread</text><text x="522.500" y="967" class="ml">Filter</text><text x="522.500" y="982" class="ml">Freq</text><text x="595" y="967" class="ml">Attack</text><text x="667" y="967" class="ml">Release</text>

<g transform="translate(451 905)"><path class="t" d="M-9 14.400A17 17 0 1 1 9 14.400"/><path class="a" stroke-width="2.500" d="M-1 0L9 15"/></g>
<g transform="translate(523 905)"><path class="t" d="M-9 14.400A17 17 0 1 1 12 -12"/><path class="a" d="M12 -12A17 17 0 0 1 9 14.400"/><path class="a" stroke-width="2.500" d="M0 0L17 -8"/></g>
<g transform="translate(595.500 905)"><path class="t" d="M-9 14.400A17 17 0 0 1 0 -17"/><path class="a" d="M0 -17A17 17 0 0 1 9 14.400"/><path class="a" stroke-width="2.500" d="M0 0V-18"/></g>
<g transform="translate(668 905)"><path class="t" d="M-9 14.400A17 17 0 0 1 0 -17"/><path class="a" d="M0 -17A17 17 0 0 1 9 14.400"/><path class="a" stroke-width="2.500" d="M0 0V-18"/></g>
<g transform="translate(451 1019)"><path class="a" d="M-14.500 9A17 17 0 1 1 9 14.400"/><path class="t" d="M-9 14.400A17 17 0 0 1 -14.500 9"/><path class="a" stroke-width="2.500" d="M1 0L-17 7.500"/></g>
<g transform="translate(523 1019)"><path class="t" d="M-9 14.400A17 17 0 1 1 9 14.400"/><path class="a" stroke-width="2.500" d="M-1 0L9 15"/></g>
<g transform="translate(595.500 1019)"><path class="a" d="M-9 14.400A17 17 0 1 1 9 14.400"/><path class="a" stroke-width="2.500" d="M1 0L-9 15"/></g>
<g transform="translate(668 1019)"><path class="t" d="M-9 14.400A17 17 0 1 1 9 14.400"/><path class="a" stroke-width="2.500" d="M-1 0L9 15"/></g>
<text x="450.500" y="934" class="kv">-6.00 dB</text><text x="523" y="934" class="kv">20R</text><text x="595" y="934" class="kv">0 st</text><text x="667.500" y="934" class="kv">0 ct</text>
<text x="451" y="1048" class="kv">3 %</text><text x="523" y="1048" class="kv">22.0 kHz</text><text x="595.500" y="1048" class="kv">0.00 ms</text><text x="667.500" y="1048" class="kv">60.0 s</text>

<!-- chain fold columns -->
<circle cx="728" cy="819" r="8.700" fill="#ffa02e" stroke="#222"/>
<circle cx="757" cy="819" r="8.700" fill="#ffa02e" stroke="#222"/>
<text transform="translate(733 1016) rotate(-90)" style="font-size:14.500px;fill:#cfcfcf;stroke:#cfcfcf;stroke-width:.3">Ride Organic Bell (1a)</text>
<text transform="translate(762 992) rotate(-90)" style="font-size:13.500px;fill:#cfcfcf;stroke:#cfcfcf;stroke-width:.3">LFO</text>
<use href="#rc" x="728" y="1030"/><use href="#sv" x="728" y="1053"/>
<g transform="translate(757 1007)"><circle r="8.800" fill="#333" stroke="#222"/><rect x="-3.500" y="-3" width="7" height="6" fill="none" stroke="#e0e0e0" stroke-width="1.400"/><path d="M-5.500 -4h11M-5.500 4h11" stroke="#e0e0e0" stroke-width="1.200"/></g>
<use href="#rc" x="757" y="1030"/><use href="#sv" x="757" y="1053"/>

<!-- right side -->
<rect x="826" y="863" width="3.500" height="150" fill="#2a2a2a"/><rect x="829.500" y="863" width="3.500" height="150" fill="#2e2e2e"/><rect x="826" y="878" width="7" height="2" fill="#4a4a4a"/>
<rect x="835" y="807" width="651" height="261" rx="5" fill="#4a4a4a"/>
<text x="1160" y="942" class="l m" style="fill:#dcdcdc;letter-spacing:.1px">Drop Audio Effects Here</text>

<!-- status bar -->
<circle cx="26" cy="1094" r="10" fill="#2f2f2f"/><rect x="24.500" y="1092" width="3" height="8" fill="#3a3a3a"/><rect x="24.500" y="1087" width="3" height="3" fill="#3a3a3a"/>
<rect x="59" y="1081" width="822" height="26" rx="3" fill="#505050"/>
<path d="M895 1084a3 3 0 0 1 3-3h23v26h-23a3 3 0 0 1-3-3z" fill="#505050"/>
<polygon points="904,1089 904,1100 911,1094.500" fill="#e6e6e6"/>
<path d="M923 1081h274a3 3 0 0 1 3 3v20a3 3 0 0 1-3 3h-274z" fill="#505050"/>
<rect x="1212" y="1081" width="27" height="26" rx="1" fill="#ffa02e"/><polygon points="1225.500,1089 1232,1099 1219,1099" fill="#111"/>
<rect x="1239" y="1081" width="101" height="26" fill="#505050"/>
<text x="1248" y="1099" class="l" style="fill:#e0e0e0;letter-spacing:0">Cymbals DR</text>
<rect x="1338.500" y="1079" width="82" height="30" rx="7" fill="#4a4a4a" stroke="#141414" stroke-width="3"/>
<rect x="1341" y="1081" width="77" height="3" fill="#567781"/>
<g fill="#d8d8d8"><rect x="1343" y="1088" width="33" height="3"/><rect x="1343" y="1093" width="33" height="3"/><rect x="1343" y="1098" width="33" height="3"/><rect x="1343" y="1103" width="33" height="3"/></g>
<path d="M1349 1086v21M1355 1086v21M1361 1086v21M1367 1086v21" stroke="#4a4a4a"/>
<rect x="1378" y="1085" width="6.500" height="5" fill="#ff94a6"/><rect x="1385" y="1085" width="6.500" height="5" fill="#ff94a6"/><rect x="1392" y="1085" width="7" height="5" fill="#ffa529"/><rect x="1400" y="1085" width="7" height="5" fill="#ffa529"/>
<rect x="1378" y="1096" width="6.500" height="5" fill="#c6931f"/><rect x="1385" y="1096" width="6.500" height="5" fill="#f7f47c"/><rect x="1392" y="1096" width="7" height="5" fill="#bffb00"/><rect x="1400" y="1096" width="7" height="5" fill="#bffb00"/>
<path d="M1445.500 1102v-10M1451.500 1102v-16M1457 1102v-10M1463 1102v-14" stroke="#ffa02e" stroke-width="2.800"/>
<polygon points="1473,1092 1481,1092 1477,1098" fill="#2c2c2c"/>
</svg>
</body></html>
